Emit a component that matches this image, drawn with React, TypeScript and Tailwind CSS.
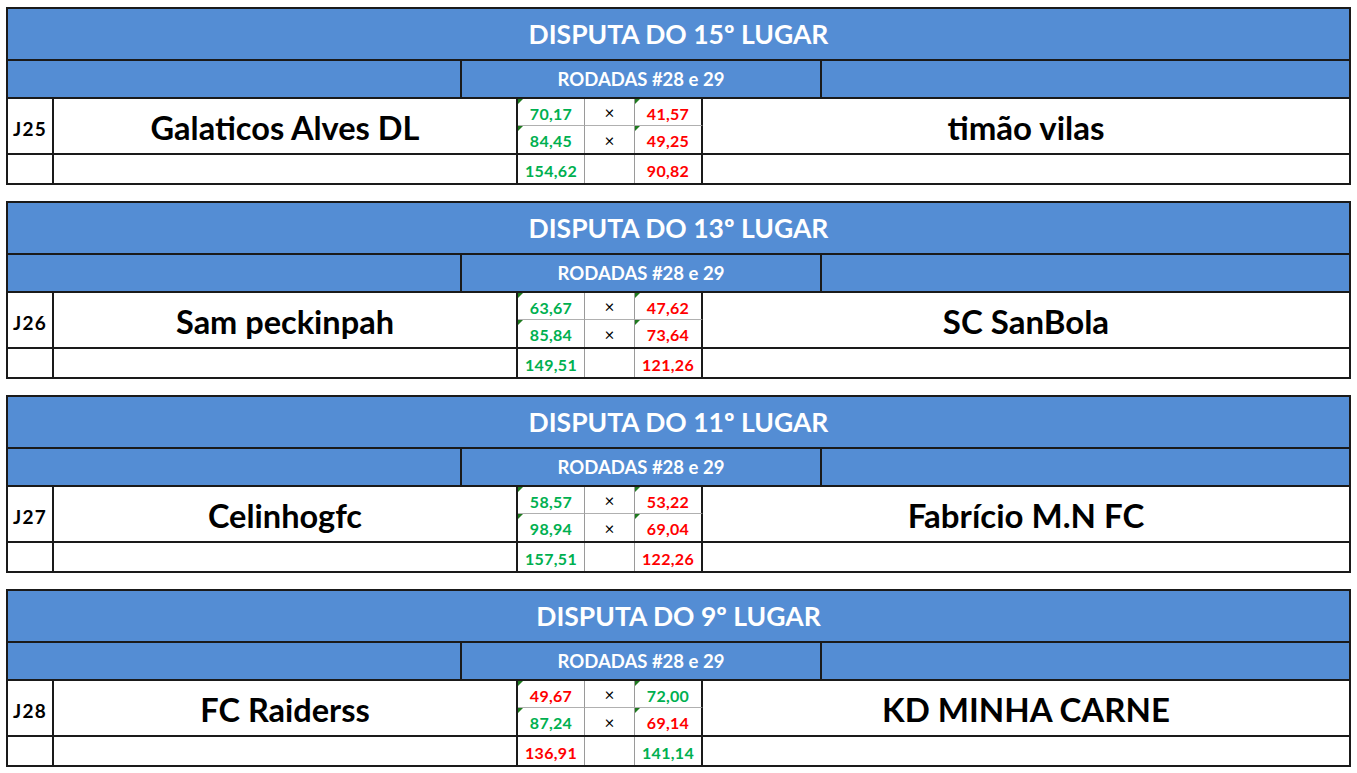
import React from "react";

type Match = {
  title: string;
  code: string;
  home: string;
  away: string;
  rounds: [number, number][];
  total: [number, number];
};

const matches: Match[] = [
  {
    title: "DISPUTA DO 15º LUGAR",
    code: "J25",
    home: "Galaticos Alves DL",
    away: "timão vilas",
    rounds: [
      [70.17, 41.57],
      [84.45, 49.25],
    ],
    total: [154.62, 90.82],
  },
  {
    title: "DISPUTA DO 13º LUGAR",
    code: "J26",
    home: "Sam peckinpah",
    away: "SC SanBola",
    rounds: [
      [63.67, 47.62],
      [85.84, 73.64],
    ],
    total: [149.51, 121.26],
  },
  {
    title: "DISPUTA DO 11º LUGAR",
    code: "J27",
    home: "Celinhogfc",
    away: "Fabrício M.N FC",
    rounds: [
      [58.57, 53.22],
      [98.94, 69.04],
    ],
    total: [157.51, 122.26],
  },
  {
    title: "DISPUTA DO 9º LUGAR",
    code: "J28",
    home: "FC Raiderss",
    away: "KD MINHA CARNE",
    rounds: [
      [49.67, 72.0],
      [87.24, 69.14],
    ],
    total: [136.91, 141.14],
  },
];

const fmt = (n: number) => n.toFixed(2).replace(".", ",");

function Score({ value, win, flag }: { value: number; win: boolean; flag?: boolean }) {
  return (
    <div
      className={`relative flex items-center justify-center pt-[3px] text-[16px] font-bold tracking-[0.3px] ${
        win ? "text-[#00b050]" : "text-[#ff0000]"
      }`}
    >
      {flag && (
        <span className="absolute left-0 top-0 h-0 w-0 border-t-[5px] border-r-[5px] border-t-[#1f7a1f] border-r-transparent" />
      )}
      {fmt(value)}
    </div>
  );
}

function MatchBlock({ m }: { m: Match }) {
  return (
    <div className="w-[1345px] border-2 border-[#1a1a1a]">
      <div className="flex h-[52px] items-center justify-center border-b-2 border-[#1a1a1a] bg-[#548dd4] pt-[2px] text-[26.5px] font-bold text-white">
        {m.title}
      </div>
      <div className="flex h-[38px] border-b-2 border-[#1a1a1a] bg-[#548dd4]">
        <div className="w-[454px] border-r-2 border-[#1a1a1a]" />
        <div className="flex w-[360px] items-center justify-center border-r-2 border-[#1a1a1a] pt-[2px] text-[18.5px] font-bold text-white">
          RODADAS #28 e 29
        </div>
        <div className="flex-1" />
      </div>
      <div className="grid grid-cols-[46px_464px_67px_50px_68px_1fr] grid-rows-[28px_28px_28px]">
        <div className="row-span-2 flex items-center justify-center border-r-2 border-b-2 border-[#1a1a1a] pt-[6px] text-[19px] font-bold tracking-[1.2px]">
          {m.code}
        </div>
        <div className="row-span-2 flex items-center justify-center border-r-2 border-b-2 border-[#1a1a1a] pt-[4px] text-[32.5px] font-bold">
          {m.home}
        </div>
        <div className="col-start-3 row-start-1 grid grid-rows-2 border-b-2 border-[#1a1a1a] row-span-2 col-span-3 grid-cols-[67px_50px_68px]">
          {m.rounds.map(([a, b], i) => (
            <React.Fragment key={i}>
              <div className={`${i === 0 ? "border-b border-[#b0b0b0]" : ""} border-r border-r-[#9a9a9a] grid`}>
                <Score value={a} win={a > b} flag />
              </div>
              <div
                className={`${i === 0 ? "border-b border-[#b0b0b0]" : ""} flex items-center justify-center border-r border-r-[#9a9a9a] pt-[2px] text-[17px] text-black`}
              >
                ×
              </div>
              <div className={`${i === 0 ? "border-b border-[#b0b0b0]" : ""} border-r-2 border-r-[#1a1a1a] grid`}>
                <Score value={b} win={b > a} flag />
              </div>
            </React.Fragment>
          ))}
        </div>
        <div className="col-start-6 row-start-1 row-span-2 flex items-center justify-center border-b-2 border-[#1a1a1a] pt-[4px] text-[33px] font-bold">
          {m.away}
        </div>
        <div className="border-r-2 border-[#1a1a1a]" />
        <div className="border-r-2 border-[#1a1a1a]" />
        <div className="grid border-r border-[#9a9a9a]">
          <Score value={m.total[0]} win={m.total[0] > m.total[1]} />
        </div>
        <div className="border-r border-[#9a9a9a]" />
        <div className="grid border-r-2 border-[#1a1a1a]">
          <Score value={m.total[1]} win={m.total[1] > m.total[0]} />
        </div>
        <div />
      </div>
    </div>
  );
}

export default function App() {
  return (
    <div
      className="flex min-h-screen flex-col gap-[16px] bg-white pl-[6px] pt-[7px] text-black"
      style={{ fontFamily: "Lato, 'Noto Sans', sans-serif" }}
    >
      {matches.map((m) => (
        <MatchBlock key={m.code} m={m} />
      ))}
    </div>
  );
}
